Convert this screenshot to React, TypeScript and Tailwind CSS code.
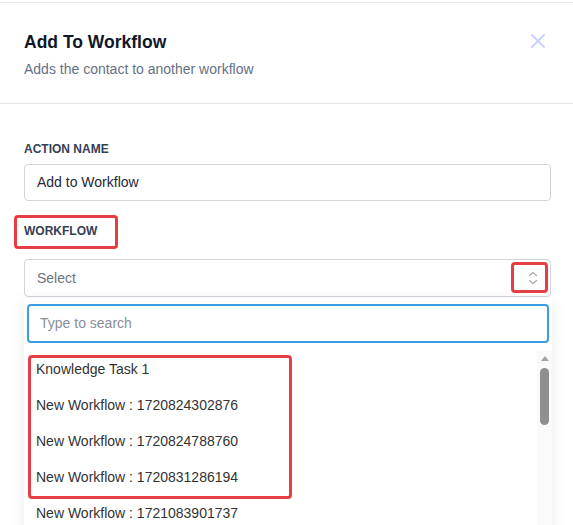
import { X } from "lucide-react";

const WORKFLOWS = [
  "Knowledge Task 1",
  "New Workflow : 1720824302876",
  "New Workflow : 1720824788760",
  "New Workflow : 1720831286194",
  "New Workflow : 1721083901737",
];

export default function App() {
  return (
    <div className="relative h-[525px] w-[573px] overflow-hidden bg-white pt-[2px] font-['Liberation_Sans',Arial,sans-serif] text-[#1f2937]">
      {/* Header */}
      <div className="border-t border-b border-[#e5e7eb] pl-6 pr-[22px] pt-[27px] pb-[24px]">
        <div className="flex items-start justify-between">
          <div>
            <h2 className="text-[17.5px] leading-[24px] font-bold text-[#101828]">Add To Workflow</h2>
            <p className="mt-[5px] text-[14px] leading-[20px] text-[#667085]">
              Adds the contact to another workflow
            </p>
          </div>
          <button className="mt-[-1px] mr-[1px] text-[#c7d2fe]" aria-label="Close">
            <X className="h-[24px] w-[24px]" strokeWidth={1.8} />
          </button>
        </div>
      </div>

      {/* Body */}
      <div className="pl-6 pr-[22px] pt-[37px]">
        <label className="block text-[12px] leading-[16px] font-bold uppercase text-[#344054]">
          Action Name
        </label>
        <div className="mt-[7px] flex h-[37px] items-center rounded-[4px] border border-[#d0d5dd] px-[12px] text-[14px] text-[#1f2937]">
          Add to Workflow
        </div>

        <div className="relative mt-[22px] inline-block">
          <label className="block text-[12px] leading-[16px] font-bold uppercase text-[#344054]">
            Workflow
          </label>
          <div className="absolute -top-[8px] -left-[10px] h-[34px] w-[104px] rounded-[4px] border-[3px] border-[#e53e45]" />
        </div>

        <div className="mt-[17px] flex h-[38px] items-center justify-between rounded-[4px] border border-[#d0d5dd] pl-[12px] pr-[5px] text-[14px] text-[#6b7280]">
          <span>Select</span>
          <div className="relative flex h-[24px] w-[24px] items-center justify-center">
            <svg viewBox="0 0 12 16" className="h-[16px] w-[12px]" fill="none" stroke="#a8adb5" strokeWidth={1.3} strokeLinecap="round" strokeLinejoin="round">
              <path d="M2.5 5.5 6 2.5l3.5 3" />
              <path d="M2.5 10.5 6 13.5l3.5-3" />
            </svg>
            <div className="absolute -top-[4px] -left-[10px] h-[31px] w-[37px] rounded-[4px] border-[3px] border-[#e53e45]" />
          </div>
        </div>

        {/* Dropdown panel */}
        <div className="mt-[1px] -mr-[1px] bg-white shadow-[0_2px_14px_rgba(0,0,0,0.08)]">
          <div className="pl-[3px] pr-[3px] pt-[6px]">
            <div className="flex h-[39px] items-center rounded-[4px] border-2 border-[#3b9ee0] px-[11px] text-[14px] text-[#8a8f98]">
              Type to search
            </div>
          </div>
          <div className="mt-[8px] flex">
            <div className="relative flex-1 pl-[12px]">
              {WORKFLOWS.map((w) => (
                <div key={w} className="flex h-[36px] items-center text-[14px] text-[#333333]">
                  {w}
                </div>
              ))}
              <div className="absolute top-[4px] left-[4px] h-[144px] w-[264px] rounded-[4px] border-[3px] border-[#e53e45]" />
            </div>
            <div className="flex w-[15px] flex-col items-center bg-[#fafafa] pt-[5px]">
              <div className="h-0 w-0 border-x-[4px] border-b-[5px] border-x-transparent border-b-[#a3a3a3]" />
              <div className="mt-[7px] h-[57px] w-[9px] rounded-full bg-[#8f8f8f]" />
            </div>
          </div>
        </div>
      </div>
    </div>
  );
}
